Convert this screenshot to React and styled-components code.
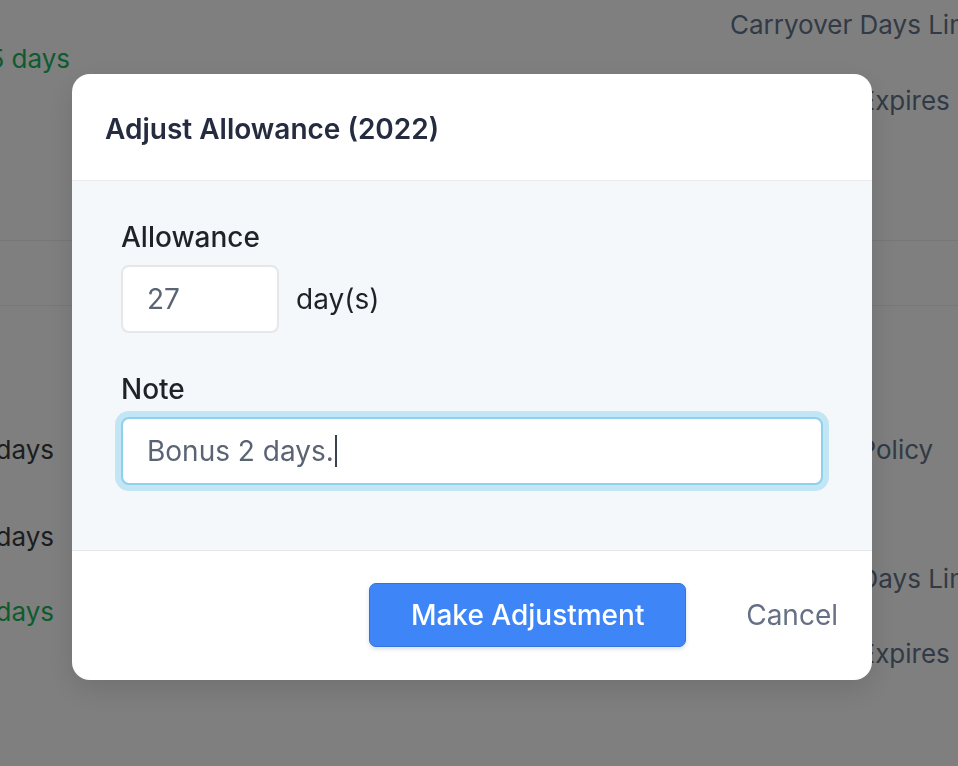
import React from "react";
import styled, { createGlobalStyle } from "styled-components";

const GlobalStyle = createGlobalStyle`
  html, body {
    margin: 0;
    padding: 0;
    background: #ffffff;
    font-family: Inter, "Noto Sans", "Liberation Sans", sans-serif;
    -webkit-font-smoothing: antialiased;
  }
  * { box-sizing: border-box; }
`;

const Page = styled.div`
  width: 958px;
  height: 766px;
  overflow: hidden;
  background: #ffffff;
  font-size: 26px;
`;

const Row = styled.div`
  display: grid;
  grid-template-columns: 70px 660px 1fr;
  align-items: center;
  line-height: 16px;
  height: ${(p) => p.$h}px;
`;

const LeftCell = styled.div`
  display: flex;
  justify-content: flex-end;
  white-space: nowrap;
  padding-right: ${(p) => 70 - (p.$end || 70)}px;
  color: ${(p) => (p.$green ? "#1cb65d" : "#383b40")};
`;

const RightCell = styled.div`
  grid-column: 3;
  white-space: nowrap;
  color: #64748b;
`;

const Divider = styled.div`
  height: 1px;
  background: #eeeeee;
`;

const Gap = styled.div`
  height: ${(p) => p.$h}px;
`;

const Overlay = styled.div`
  position: fixed;
  inset: 0;
  background: rgba(0, 0, 0, 0.5);
  display: flex;
  align-items: center;
  justify-content: center;
  padding: 0 14px 12px 0;
  font-size: 28px;
`;

const Modal = styled.div`
  width: 800px;
  background: #ffffff;
  border-radius: 18px;
  overflow: hidden;
  box-shadow: 0 10px 30px rgba(0, 0, 0, 0.12);
`;

const Header = styled.div`
  height: 107px;
  display: flex;
  align-items: center;
  padding: 0 33px;
  border-bottom: 1px solid #e9ebee;
`;

const Title = styled.h2`
  margin: 0;
  font-size: 28px;
  font-weight: 600;
  color: #262c40;
  padding-top: 4px;
`;

const Body = styled.div`
  background: #f5f8fb;
  padding: 40px 49px 65px;
  display: flex;
  flex-direction: column;
  gap: 40px;
  border-bottom: 1px solid #e5e7eb;
`;

const Field = styled.div`
  display: flex;
  flex-direction: column;
  gap: 12px;
`;

const Label = styled.label`
  font-size: 28px;
  font-weight: 500;
  color: #1f2328;
  line-height: 32px;
`;

const InputRow = styled.div`
  display: flex;
  align-items: center;
  gap: 17px;
  font-size: 28px;
  color: #1f2328;
`;

const NumberInput = styled.input`
  width: 158px;
  height: 68px;
  border: 2px solid #e5e7eb;
  border-radius: 8px;
  background: #ffffff;
  padding: 0 24px;
  font: inherit;
  font-size: 28px;
  color: #5b6475;
  outline: none;
`;

const TextBox = styled.div`
  height: 68px;
  border: 2px solid #8dd1ec;
  border-radius: 8px;
  background: #ffffff;
  box-shadow: 0 0 0 6px #c2e6f4;
  padding: 0 24px;
  display: flex;
  align-items: center;
  font-size: 28px;
  color: #5b6475;
`;

const Caret = styled.span`
  display: inline-block;
  width: 2px;
  height: 32px;
  margin-left: 1px;
  background: #3a4250;
`;

const Footer = styled.div`
  height: 129px;
  display: flex;
  align-items: center;
  justify-content: flex-end;
  gap: 60px;
  padding: 0 34px 2px;
`;

const PrimaryButton = styled.button`
  width: 317px;
  height: 64px;
  border: 1px solid #3274de;
  border-radius: 7px;
  background: #3e86f8;
  color: #ffffff;
  font: inherit;
  font-size: 28px;
  font-weight: 500;
  box-shadow: 0 2px 4px rgba(30, 64, 140, 0.18);
  cursor: pointer;
`;

const LinkButton = styled.button`
  border: none;
  background: none;
  padding: 0;
  font: inherit;
  font-size: 28px;
  color: #667085;
  cursor: pointer;
`;

const background = [
  { h: 50, r: "Carryover Days Limit" },
  { h: 18, l: "5 days", green: true },
  { h: 66, r: "Carryover Expires" },
];

const background2 = [
  { h: 60, l: "3 days", r: "Carryover Policy", end: 54 },
  { h: 27 },
  { h: 60, l: "2 days", end: 54 },
  { h: 24, r: "Carryover Days Limit" },
  { h: 42, l: "5 days", end: 54, green: true },
  { h: 42, r: "Carryover Expires" },
];

const renderRows = (rows) =>
  rows.map((x, i) => (
    <Row key={i} $h={x.h}>
      <LeftCell $end={x.end} $green={x.green}>
        {x.l || ""}
      </LeftCell>
      {x.r && <RightCell>{x.r}</RightCell>}
    </Row>
  ));

const App = () => {
  return (
    <>
      <GlobalStyle />
      <Page>
        {renderRows(background)}
        <Gap $h={106} />
        <Divider />
        <Gap $h={64} />
        <Divider />
        <Gap $h={114} />
        {renderRows(background2)}
      </Page>
      <Overlay>
        <Modal>
          <Header>
            <Title>Adjust Allowance (2022)</Title>
          </Header>
          <Body>
            <Field>
              <Label>Allowance</Label>
              <InputRow>
                <NumberInput defaultValue="27" />
                <span>day(s)</span>
              </InputRow>
            </Field>
            <Field>
              <Label>Note</Label>
              <TextBox role="textbox">
                Bonus 2 days.
                <Caret />
              </TextBox>
            </Field>
          </Body>
          <Footer>
            <PrimaryButton>Make Adjustment</PrimaryButton>
            <LinkButton>Cancel</LinkButton>
          </Footer>
        </Modal>
      </Overlay>
    </>
  );
};

export default App;
